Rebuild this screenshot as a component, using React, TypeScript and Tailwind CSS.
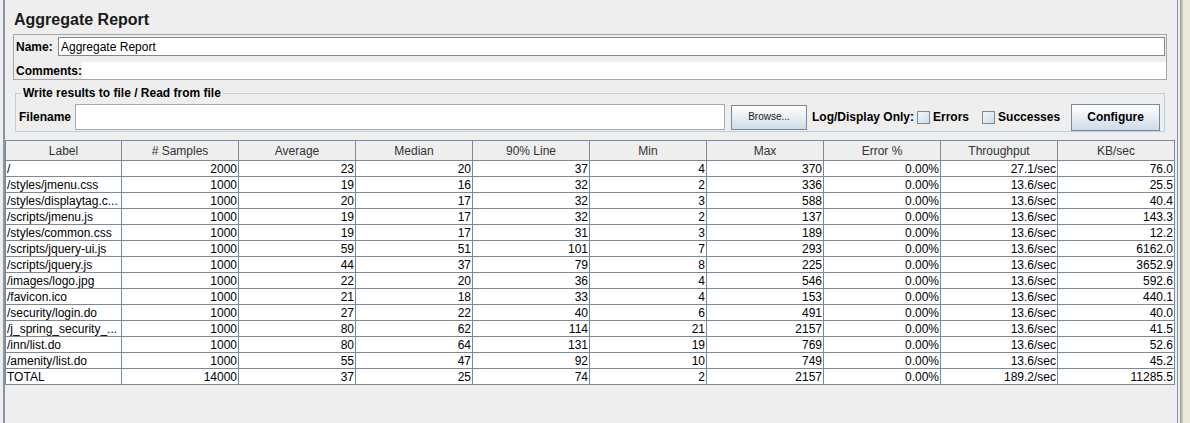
import React from "react";

const rows: string[][] = [
  ["/", "2000", "23", "20", "37", "4", "370", "0.00%", "27.1/sec", "76.0"],
  ["/styles/jmenu.css", "1000", "19", "16", "32", "2", "336", "0.00%", "13.6/sec", "25.5"],
  ["/styles/displaytag.c...", "1000", "20", "17", "32", "3", "588", "0.00%", "13.6/sec", "40.4"],
  ["/scripts/jmenu.js", "1000", "19", "17", "32", "2", "137", "0.00%", "13.6/sec", "143.3"],
  ["/styles/common.css", "1000", "19", "17", "31", "3", "189", "0.00%", "13.6/sec", "12.2"],
  ["/scripts/jquery-ui.js", "1000", "59", "51", "101", "7", "293", "0.00%", "13.6/sec", "6162.0"],
  ["/scripts/jquery.js", "1000", "44", "37", "79", "8", "225", "0.00%", "13.6/sec", "3652.9"],
  ["/images/logo.jpg", "1000", "22", "20", "36", "4", "546", "0.00%", "13.6/sec", "592.6"],
  ["/favicon.ico", "1000", "21", "18", "33", "4", "153", "0.00%", "13.6/sec", "440.1"],
  ["/security/login.do", "1000", "27", "22", "40", "6", "491", "0.00%", "13.6/sec", "40.0"],
  ["/j_spring_security_...", "1000", "80", "62", "114", "21", "2157", "0.00%", "13.6/sec", "41.5"],
  ["/inn/list.do", "1000", "80", "64", "131", "19", "769", "0.00%", "13.6/sec", "52.6"],
  ["/amenity/list.do", "1000", "55", "47", "92", "10", "749", "0.00%", "13.6/sec", "45.2"],
  ["TOTAL", "14000", "37", "25", "74", "2", "2157", "0.00%", "189.2/sec", "11285.5"],
];

const headers = ["Label", "# Samples", "Average", "Median", "90% Line", "Min", "Max", "Error %", "Throughput", "KB/sec"];

function Checkbox() {
  return (
    <span className="inline-block w-[13px] h-[13px] border border-[#7a8a99] bg-gradient-to-br from-[#f4f8fc] to-[#cddbe9]" />
  );
}

export default function App() {
  return (
    <div
      className="w-[1190px] h-[423px] bg-[#eeeeee] flex overflow-hidden text-black"
      style={{ fontFamily: '"Liberation Sans", Arial, sans-serif' }}
    >
      <div className="w-[3px] shrink-0" />
      <div className="w-[2px] shrink-0 bg-[#8895a3]" />
      <div className="w-[1172px] shrink-0 flex flex-col">
        {/* Title */}
        <div className="mt-[10px] ml-[9px] h-[20px] leading-[20px] text-[16px] font-bold text-[#1a1a1a]">
          Aggregate Report
        </div>
        {/* Name / comments box */}
        <div className="mt-[4px] ml-[8px] w-[1154px] h-[46px] border border-[#a6a6a6] flex flex-col">
          <div className="flex items-center mt-[2px] h-[19px]">
            <span className="ml-[2px] w-[42px] text-[12px] font-bold leading-[14px]">Name:</span>
            <div className="w-[1107px] h-[19px] border border-[#7a8a99] bg-white flex items-center pl-[2px] text-[12px] leading-[14px]">
              Aggregate Report
            </div>
          </div>
          <div className="flex items-center mt-[6px] h-[17px]">
            <span className="ml-[2px] w-[66px] text-[12px] font-bold leading-[14px]">Comments:</span>
            <div className="flex-1 h-[17px] bg-white" />
          </div>
        </div>
        {/* File panel */}
        <fieldset className="mt-[6px] ml-[10px] w-[1150px] border border-[#b8cfe5] px-0 pb-[1px]">
          <legend className="ml-[5px] px-[2px] text-[12px] font-bold leading-[14px]">
            Write results to file / Read from file
          </legend>
          <div className="mt-[4px] h-[26px] flex items-center whitespace-nowrap">
            <span className="ml-[3px] w-[56px] shrink-0 text-[12px] font-bold leading-[14px]">Filename</span>
            <div className="w-[650px] shrink-0 h-[26px] border border-[#a2acb6] bg-white" />
            <button className="ml-[6px] shrink-0 w-[76px] h-[25px] border border-[#7a8a99] bg-gradient-to-b from-[#ffffff] to-[#cfdbe8] text-[10px] leading-[12px] text-[#222]">
              Browse...
            </button>
            <span className="ml-[5px] shrink-0 text-[12px] font-bold leading-[14px]">Log/Display Only:</span>
            <span className="ml-[3px] shrink-0 flex items-center">
              <Checkbox />
            </span>
            <span className="ml-[3px] shrink-0 text-[12px] font-bold leading-[14px]">Errors</span>
            <span className="ml-[13px] shrink-0 flex items-center">
              <Checkbox />
            </span>
            <span className="ml-[3px] shrink-0 text-[12px] font-bold leading-[14px]">Successes</span>
            <button className="ml-[11px] shrink-0 w-[89px] h-[27px] border border-[#7a8a99] bg-gradient-to-b from-[#ffffff] to-[#cfdbe8] text-[12px] font-bold leading-[14px]">
              Configure
            </button>
          </div>
        </fieldset>
        {/* Table */}
        <div className="mt-[8px] w-[1170px] border-t border-l border-[#7a8a99]">
          <div className="grid grid-cols-[116px_repeat(9,117px)]">
            {headers.map((h, i) => (
              <div
                key={i}
                className="h-[20px] border-r border-b border-[#7a8a99] bg-[#eeeeee] flex items-center justify-center text-[12px] leading-[14px] text-[#333]"
              >
                {h}
              </div>
            ))}
          </div>
          {rows.map((r, ri) => (
            <div key={ri} className="grid grid-cols-[116px_repeat(9,117px)] bg-white">
              {r.map((c, ci) => (
                <div
                  key={ci}
                  className={
                    "h-[16px] border-r border-b border-[#7a8a99] flex items-center text-[12px] leading-[14px] whitespace-nowrap overflow-hidden " +
                    (ci === 0 ? "justify-start pl-[1px]" : "justify-end pr-[1px]")
                  }
                >
                  {c}
                </div>
              ))}
            </div>
          ))}
        </div>
      </div>
      <div className="w-px shrink-0 bg-[#8a96a2]" />
      <div className="w-[2px] shrink-0" />
      <div className="w-px shrink-0 bg-[#9a9a96]" />
      <div className="w-[2px] shrink-0 bg-[#c4c2b8]" />
      <div className="flex-1 bg-[#ece9d8]" />
    </div>
  );
}
